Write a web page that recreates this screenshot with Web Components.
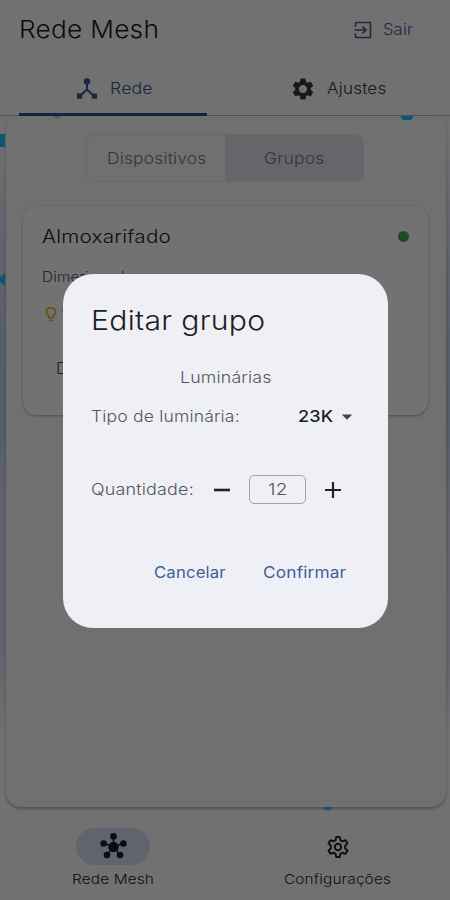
<!DOCTYPE html>
<html lang="pt-BR">
<head>
<meta charset="utf-8">
<meta name="viewport" content="width=device-width, initial-scale=1">
<title>Rede Mesh</title>
<style>
body {
    margin: 0;
    background: #fafafc;
    font-family: Inter, "Open Sans", sans-serif;
    font-weight: 350;
    color: #1b1b1f;
}
</style>
</head>
<body>
<mesh-app></mesh-app>

<script>
const icons = {
    exit: '<path fill="none" stroke="currentColor" stroke-width="2" d="M3 8V4q0-1 1-1h16q1 0 1 1v16q0 1-1 1H4q-1 0-1-1v-4M2 12h13M11.500 8l4 4-4 4"/>',
    hub: '<path fill="none" stroke="currentColor" stroke-width="2" d="M12 5v7.500L5 19M12 12.500l7 6.500"/><circle cx="12" cy="4.500" r="3.200"/><path d="M2 16.500h5.200v5.200H2zM16.800 16.500H22v5.200h-5.200z"/>',
    gear: '<path fill-rule="evenodd" d="M19.140 12.940c.040-.3.060-.61.060-.94 0-.32-.02-.64-.07-.94l2.030-1.580c.18-.14.23-.41.120-.61l-1.920-3.320c-.12-.22-.37-.29-.59-.22l-2.390.96c-.5-.38-1.030-.7-1.620-.94l-.36-2.540c-.04-.24-.24-.41-.48-.41h-3.840c-.24 0-.43.17-.47.41l-.36 2.540c-.59.24-1.130.57-1.620.94l-2.390-.96c-.22-.08-.47 0-.59.22L2.740 8.870c-.12.21-.08.47.12.61l2.030 1.580c-.05.3-.09.63-.09.94s.02.64.07.94l-2.030 1.580c-.18.14-.23.41-.12.61l1.920 3.320c.12.22.37.29.59.22l2.390-.96c.5.38 1.030.7 1.620.94l.36 2.540c.05.24.24.41.48.41h3.840c.24 0 .44-.17.47-.41l.36-2.540c.59-.24 1.130-.56 1.620-.94l2.390.96c.22.08.47 0 .59-.22l1.920-3.320c.12-.22.07-.47-.12-.61l-2.010-1.580zM12 15.800c-2.090 0-3.800-1.710-3.800-3.800s1.710-3.800 3.800-3.800 3.800 1.710 3.800 3.800-1.710 3.800-3.800 3.800z"/>',
    gearLine: '<g fill="none" stroke="currentColor" stroke-width="2" stroke-linejoin="round"><path d="M10.300 2h3.400l.8 3.200 1.900 1.100 3.200-1 1.900 3-2.400 2.500v2.400l2.400 2.500-1.900 3-3.200-1-1.900 1.100-.8 3.200h-3.400l-.8-3.200-1.900-1.100-3.200 1-1.900-3 2.400-2.500v-2.400L2.500 8.300l1.900-3 3.200 1 1.900-1.100z"/><circle cx="12" cy="12" r="3.200"/></g>',
    mesh: '<path stroke="currentColor" stroke-width="1.300" d="M12 12V3M12 12 3.200 9.300M12 12l8.800-2.700M12 12l-5.800 7.700M12 12l5.800 7.700"/><circle cx="12" cy="12.400" r="4.600"/><circle cx="12" cy="3" r="2.900"/><circle cx="3.200" cy="9.300" r="2.900"/><circle cx="20.800" cy="9.300" r="2.900"/><circle cx="6.200" cy="19.600" r="2.900"/><circle cx="17.800" cy="19.600" r="2.900"/>',
    bulb: '<path fill="none" stroke="currentColor" stroke-width="2.200" d="M9 17v-2.600C3.500 11 5.600 3.500 12 3.500s8.500 7.500 3 10.900V17zM9.500 20.500h5"/>',
    minus: '<path d="M4 10.700h16v2.600H4z"/>',
    plus: '<path d="M4 10.900h6.900V4h2.200v6.900H20v2.200h-6.900V20h-2.200v-6.900H4z"/>',
    drop: '<path d="m5 8.500 7 7 7-7z"/>'
}

class MeshIcon extends HTMLElement {
    constructor() {
        super()
        this.attachShadow({ mode: 'open' })
    }
    connectedCallback() {
        const size = this.getAttribute('size') || 24
        this.shadowRoot.innerHTML = `
            <style>
                :host { display: block; flex: none; width: ${size}px; height: ${size}px; }
                svg { display: block; overflow: visible; }
            </style>
            <svg width="${size}" height="${size}" viewBox="0 0 24 24" fill="currentColor">${icons[this.getAttribute('name')]}</svg>
        `
    }
}
customElements.define('mesh-icon', MeshIcon)

// one line of text widened to the given width
class MeshLabel extends HTMLElement {
    constructor() {
        super()
        this.attachShadow({ mode: 'open' })
    }
    connectedCallback() {
        const width = Number(this.getAttribute('width'))
        this.shadowRoot.innerHTML = `
            <style>
                :host { display: block; flex: none; width: ${width}px; white-space: nowrap; line-height: 1.2; }
                span { display: inline-block; letter-spacing: .01em; transform-origin: 0 50%; }
            </style>
            <span><slot></slot></span>
        `
        const span = this.shadowRoot.querySelector('span')
        span.style.transform = `scaleX(${width / span.offsetWidth})`
    }
}
customElements.define('mesh-label', MeshLabel)

class MeshHeader extends HTMLElement {
    constructor() {
        super()
        this.attachShadow({ mode: 'open' })
    }
    connectedCallback() {
        this.shadowRoot.innerHTML = `
            <style>
                :host { display: block; height: 116px; box-sizing: border-box; border-bottom: 1px solid #b4b4ba; }
                .bar { display: flex; align-items: center; justify-content: space-between; height: 60px; padding: 0 37px 0 19px; }
                .title { font-size: 24px; font-weight: 300; padding-top: 1px; }
                .exit { display: flex; align-items: center; gap: 10px; color: #4a5c8c; font-size: 16px; }
                .tabs { display: grid; grid-template-columns: 1fr 1fr; height: 56px; font-size: 16px; }
                .tab { display: flex; align-items: center; justify-content: center; gap: 11px; color: #38383d; padding: 1px 0 0 1px; box-sizing: border-box; }
                .tab.on { gap: 11px; color: #3a5890; margin: 0 18px 0 19px; border-bottom: 3px solid #2c5092; border-radius: 3px 3px 0 0; padding-top: 4px; }
            </style>
            <div class="bar">
                <mesh-label class="title" width="140">Rede Mesh</mesh-label>
                <div class="exit"><mesh-icon name="exit" size="20"></mesh-icon><mesh-label width="30">Sair</mesh-label></div>
            </div>
            <div class="tabs">
                <div class="tab on"><mesh-icon name="hub" size="24"></mesh-icon><mesh-label width="43">Rede</mesh-label></div>
                <div class="tab"><mesh-icon name="gear" size="26"></mesh-icon><mesh-label width="60">Ajustes</mesh-label></div>
            </div>
        `
    }
}
customElements.define('mesh-header', MeshHeader)

class MeshGroupCard extends HTMLElement {
    constructor() {
        super()
        this.attachShadow({ mode: 'open' })
    }
    connectedCallback() {
        this.shadowRoot.innerHTML = `
            <style>
                :host {
                    display: block;
                    box-sizing: border-box;
                    height: 209px;
                    padding: 20px 19px;
                    border-radius: 14px;
                    background: #fcfcfe;
                    box-shadow: 0 1px 3px rgba(0, 0, 0, .3);
                }
                .head { display: flex; align-items: center; justify-content: space-between; font-size: 18px; }
                .dot { width: 11px; height: 11px; border-radius: 50%; background: #3fa845; }
                .dim { margin-top: 21px; font-size: 14px; color: #55555a; }
                .level { display: flex; align-items: center; gap: 1px; margin-top: 20px; font-size: 13px; color: #55555a; }
                .level mesh-icon { color: #f0b41c; }
                .action { margin: 35px 0 0 14px; font-size: 16px; color: #2c5092; }
            </style>
            <div class="head"><mesh-label width="129"><slot></slot></mesh-label><div class="dot"></div></div>
            <mesh-label class="dim" width="92">Dimerizando</mesh-label>
            <div class="level"><mesh-icon name="bulb" size="18"></mesh-icon>1</div>
            <div class="action">D</div>
        `
    }
}
customElements.define('mesh-group-card', MeshGroupCard)

class MeshContent extends HTMLElement {
    constructor() {
        super()
        this.attachShadow({ mode: 'open' })
    }
    connectedCallback() {
        this.shadowRoot.innerHTML = `
            <style>
                :host {
                    display: block;
                    position: relative;
                    height: 704px;
                    box-sizing: border-box;
                    padding: 0 4px 13px 6px;
                    background: linear-gradient(#f8f8fc 20px, #dedef2 110px, #c4d0f0 220px, #bcd0ea 310px, #dcdaf2 400px, #dddcf0 540px, #fafafc 620px);
                }
                .mark { position: absolute; background: #18c2fa; }
                .m1 { left: 0; top: 18px; width: 5px; height: 13px; }
                .m2 { left: 0; top: 157px; width: 5px; height: 13px; clip-path: polygon(100% 0, 100% 100%, 0 65%, 0 35%); }
                .m3 { left: 401px; top: 0; width: 12px; height: 4px; border-radius: 0 0 6px 6px; }
                .m4 { left: 323px; top: 691px; width: 9px; height: 3px; border-radius: 0 0 5px 5px; }
                .m5 { left: 53px; top: 0; width: 8px; height: 3px; background: #b4c2e0; clip-path: polygon(0 0, 100% 0, 55% 100%); }
                .panel {
                    height: 691px;
                    box-sizing: border-box;
                    padding: 18px 18px 0 17px;
                    border-radius: 12px 12px 15px 15px;
                    background: #f8f8fb;
                    box-shadow: 0 2px 3px rgba(0, 0, 0, .28);
                }
                .seg {
                    display: grid;
                    grid-template-columns: 1fr 1fr;
                    width: 278px;
                    height: 48px;
                    margin: 0 auto 24px 63px;
                    box-sizing: border-box;
                    border: 1px solid #e4e4ea;
                    border-radius: 8px;
                    overflow: hidden;
                    font-size: 16px;
                    color: #77777d;
                }
                .seg div { display: flex; align-items: center; justify-content: center; padding-top: 1px; }
                .seg .on { background: #dfe2ea; color: #70768f; }
            </style>
            <div class="panel">
                <div class="seg">
                    <div><mesh-label width="99">Dispositivos</mesh-label></div>
                    <div class="on"><mesh-label width="60">Grupos</mesh-label></div>
                </div>
                <mesh-group-card>Almoxarifado</mesh-group-card>
            </div>
            <div class="mark m1"></div>
            <div class="mark m2"></div>
            <div class="mark m3"></div>
            <div class="mark m4"></div>
            <div class="mark m5"></div>
        `
    }
}
customElements.define('mesh-content', MeshContent)

class MeshNav extends HTMLElement {
    constructor() {
        super()
        this.attachShadow({ mode: 'open' })
    }
    connectedCallback() {
        this.shadowRoot.innerHTML = `
            <style>
                :host { display: grid; grid-template-columns: 1fr 1fr; height: 80px; padding: 8px 0 0 1px; box-sizing: border-box; font-size: 13.5px; }
                .item { display: flex; flex-direction: column; align-items: center; gap: 6px; }
                .pill { display: flex; align-items: center; justify-content: center; width: 74px; height: 37px; border-radius: 19px; }
                .on .pill { background: #d2def4; }
                .item:not(.on) { color: #26262a; }
            </style>
            <div class="item on"><div class="pill"><mesh-icon name="mesh" size="27"></mesh-icon></div><mesh-label width="82">Rede Mesh</mesh-label></div>
            <div class="item"><div class="pill"><mesh-icon name="gearLine" size="24"></mesh-icon></div><mesh-label width="107">Configurações</mesh-label></div>
        `
    }
}
customElements.define('mesh-nav', MeshNav)

class MeshDialog extends HTMLElement {
    constructor() {
        super()
        this.attachShadow({ mode: 'open' })
    }
    connectedCallback() {
        this.shadowRoot.innerHTML = `
            <style>
                :host { position: absolute; inset: 0; display: block; padding: 274px 62px 0 63px; background: rgba(0, 0, 0, .55); }
                .box { height: 354px; box-sizing: border-box; padding: 31px 36px 0 28px; border-radius: 30px; background: #eff0f5; font-size: 16px; color: #55565b; }
                .title { font-size: 27px; font-weight: 300; color: #1d1d21; }
                .sub { margin: 31px auto 0 89px; }
                .row { display: flex; align-items: center; height: 30px; }
                .type { margin-top: 14px; }
                .value { margin-left: 58px; color: #1d1d21; font-weight: 450; }
                .type mesh-icon { margin-left: 5px; color: #46464b; }
                .count { margin-top: 43px; }
                .count mesh-icon { color: #202126; }
                .less { margin: 0 15px 0 16px; }
                .num { display: flex; align-items: center; justify-content: center; width: 57px; height: 29px; box-sizing: border-box; border: 1px solid #a3a4aa; border-radius: 5px; margin-right: 15px; padding-top: 1px; }
                .actions { display: flex; justify-content: flex-end; gap: 37px; margin: 58px 6px 0 0; color: #3f5e99; font-weight: 400; }
            </style>
            <div class="box">
                <mesh-label class="title" width="174"><slot></slot></mesh-label>
                <mesh-label class="sub" width="92">Luminárias</mesh-label>
                <div class="row type">
                    <mesh-label width="149">Tipo de luminária:</mesh-label>
                    <mesh-label class="value" width="35">23K</mesh-label>
                    <mesh-icon name="drop" size="18"></mesh-icon>
                </div>
                <div class="row count">
                    <mesh-label width="103">Quantidade:</mesh-label>
                    <mesh-icon class="less" name="minus" size="24"></mesh-icon>
                    <div class="num"><mesh-label width="19">12</mesh-label></div>
                    <mesh-icon name="plus" size="24"></mesh-icon>
                </div>
                <div class="actions">
                    <mesh-label width="72">Cancelar</mesh-label>
                    <mesh-label width="83">Confirmar</mesh-label>
                </div>
            </div>
        `
    }
}
customElements.define('mesh-dialog', MeshDialog)

class MeshApp extends HTMLElement {
    constructor() {
        super()
        this.attachShadow({ mode: 'open' })
    }
    connectedCallback() {
        this.shadowRoot.innerHTML = `
            <style>
                :host { display: block; position: relative; width: 450px; height: 900px; overflow: hidden; }
            </style>
            <mesh-header></mesh-header>
            <mesh-content></mesh-content>
            <mesh-nav></mesh-nav>
            <mesh-dialog>Editar grupo</mesh-dialog>
        `
    }
}
customElements.define('mesh-app', MeshApp)
</script>
</body>
</html>
